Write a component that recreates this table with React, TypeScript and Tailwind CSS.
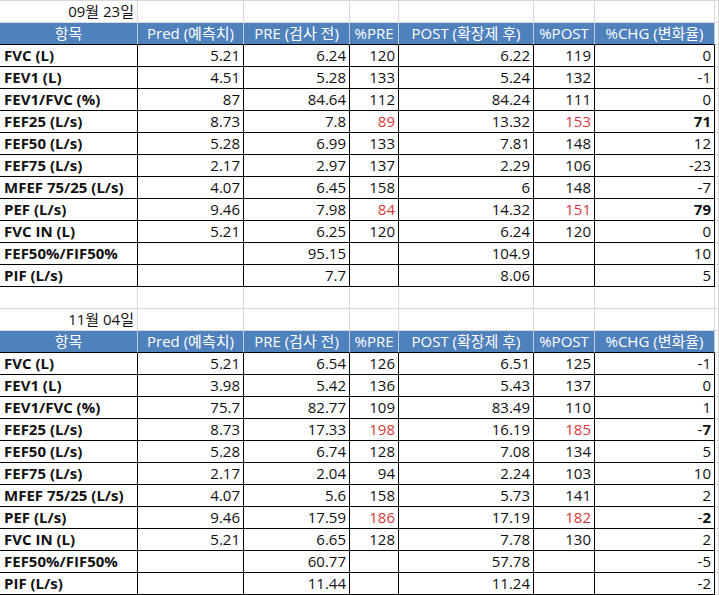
type Cell = { v: string; red?: boolean; bold?: boolean };

const c = (v: string): Cell => ({ v });
const r = (v: string): Cell => ({ v, red: true });
const b = (v: string): Cell => ({ v, bold: true });

const headers = ["항목", "Pred (예측치)", "PRE (검사 전)", "%PRE", "POST (확장제 후)", "%POST", "%CHG (변화율)"];

const sep: Cell[][] = [
  [c("FVC (L)"), c("5.21"), c("6.24"), c("120"), c("6.22"), c("119"), c("0")],
  [c("FEV1 (L)"), c("4.51"), c("5.28"), c("133"), c("5.24"), c("132"), c("-1")],
  [c("FEV1/FVC (%)"), c("87"), c("84.64"), c("112"), c("84.24"), c("111"), c("0")],
  [c("FEF25 (L/s)"), c("8.73"), c("7.8"), r("89"), c("13.32"), r("153"), b("71")],
  [c("FEF50 (L/s)"), c("5.28"), c("6.99"), c("133"), c("7.81"), c("148"), c("12")],
  [c("FEF75 (L/s)"), c("2.17"), c("2.97"), c("137"), c("2.29"), c("106"), c("-23")],
  [c("MFEF 75/25 (L/s)"), c("4.07"), c("6.45"), c("158"), c("6"), c("148"), c("-7")],
  [c("PEF (L/s)"), c("9.46"), c("7.98"), r("84"), c("14.32"), r("151"), b("79")],
  [c("FVC IN (L)"), c("5.21"), c("6.25"), c("120"), c("6.24"), c("120"), c("0")],
  [c("FEF50%/FIF50%"), c(""), c("95.15"), c(""), c("104.9"), c(""), c("10")],
  [c("PIF (L/s)"), c(""), c("7.7"), c(""), c("8.06"), c(""), c("5")],
];

const nov: Cell[][] = [
  [c("FVC (L)"), c("5.21"), c("6.54"), c("126"), c("6.51"), c("125"), c("-1")],
  [c("FEV1 (L)"), c("3.98"), c("5.42"), c("136"), c("5.43"), c("137"), c("0")],
  [c("FEV1/FVC (%)"), c("75.7"), c("82.77"), c("109"), c("83.49"), c("110"), c("1")],
  [c("FEF25 (L/s)"), c("8.73"), c("17.33"), r("198"), c("16.19"), r("185"), b("-7")],
  [c("FEF50 (L/s)"), c("5.28"), c("6.74"), c("128"), c("7.08"), c("134"), c("5")],
  [c("FEF75 (L/s)"), c("2.17"), c("2.04"), c("94"), c("2.24"), c("103"), c("10")],
  [c("MFEF 75/25 (L/s)"), c("4.07"), c("5.6"), c("158"), c("5.73"), c("141"), c("2")],
  [c("PEF (L/s)"), c("9.46"), c("17.59"), r("186"), c("17.19"), r("182"), b("-2")],
  [c("FVC IN (L)"), c("5.21"), c("6.65"), c("128"), c("7.78"), c("130"), c("2")],
  [c("FEF50%/FIF50%"), c(""), c("60.77"), c(""), c("57.78"), c(""), c("-5")],
  [c("PIF (L/s)"), c(""), c("11.44"), c(""), c("11.24"), c(""), c("-2")],
];

const cols = "grid grid-cols-[138px_106px_106px_49px_135px_61px_120px_1fr]";

function BlankRow({ date, top }: { date?: string; top?: boolean }) {
  return (
    <div className={`${cols} ${top ? "h-[23px] border-t border-[#d9d9d9]" : "h-[22px]"}`}>
      {Array.from({ length: 8 }).map((_, i) => (
        <div key={i} className="flex items-center justify-end border-r border-b border-[#d9d9d9] pr-[3px]">
          {i === 0 && date}
        </div>
      ))}
    </div>
  );
}

function HeaderRow() {
  return (
    <div className={`${cols} h-[22px]`}>
      {headers.map((h) => (
        <div key={h} className="flex items-center justify-center border-r border-b border-r-[#b8cce4] border-b-black bg-[#4f81bd] text-white">
          {h}
        </div>
      ))}
      <div className="border-r border-b border-[#d9d9d9]" />
    </div>
  );
}

function Value({ cell }: { cell: Cell }) {
  if (cell.bold && cell.v.startsWith("-")) {
    return (
      <span>
        -<b className="font-bold">{cell.v.slice(1)}</b>
      </span>
    );
  }
  return <span className={cell.bold ? "font-bold" : ""}>{cell.v}</span>;
}

function DataRow({ row }: { row: Cell[] }) {
  return (
    <div className={`${cols} h-[22px]`}>
      {row.map((cell, i) =>
        i === 0 ? (
          <div key={i} className="flex items-center border-r border-b border-black pl-[4px] font-bold">
            {cell.v}
          </div>
        ) : (
          <div
            key={i}
            className={`flex items-center justify-end border-r border-b border-black pr-[3px] ${cell.red ? "text-[#d8383a]" : ""}`}
          >
            <Value cell={cell} />
          </div>
        )
      )}
      <div className="border-r border-b border-[#d9d9d9]" />
    </div>
  );
}

function Sheet({ date, rows, top }: { date: string; rows: Cell[][]; top?: boolean }) {
  return (
    <div>
      <BlankRow date={date} top={top} />
      <HeaderRow />
      {rows.map((row) => (
        <DataRow key={row[0].v} row={row} />
      ))}
    </div>
  );
}

export default function App() {
  return (
    <div className="h-[595px] w-[719px] overflow-hidden bg-white font-['Open_Sans','Noto_Sans_CJK_KR',sans-serif] text-[15px] leading-none text-[#111]">
      <Sheet date="09월 23일" rows={sep} top />
      <BlankRow />
      <Sheet date="11월 04일" rows={nov} />
    </div>
  );
}
